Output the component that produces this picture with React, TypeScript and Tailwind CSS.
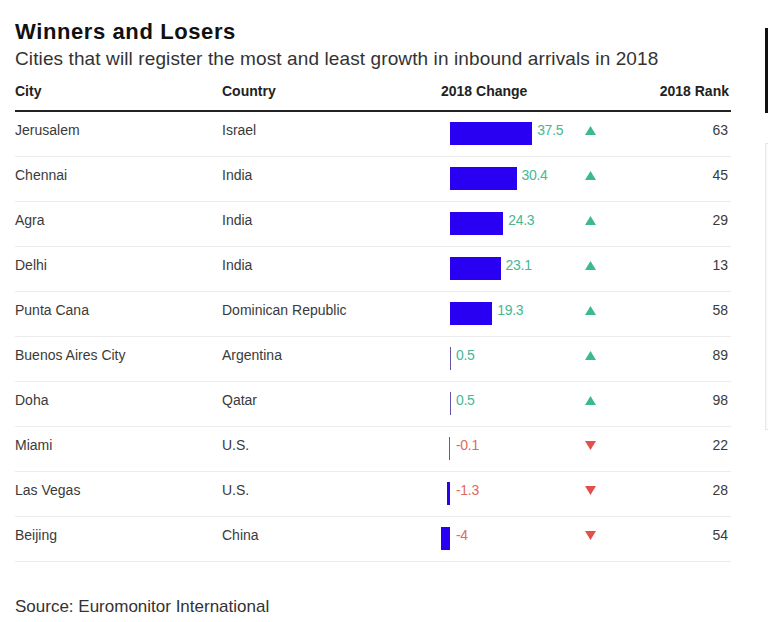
import React from "react";

type Row = { city: string; country: string; change: number; label: string; rank: number };

const rows: Row[] = [
  { city: "Jerusalem", country: "Israel", change: 37.5, label: "37.5", rank: 63 },
  { city: "Chennai", country: "India", change: 30.4, label: "30.4", rank: 45 },
  { city: "Agra", country: "India", change: 24.3, label: "24.3", rank: 29 },
  { city: "Delhi", country: "India", change: 23.1, label: "23.1", rank: 13 },
  { city: "Punta Cana", country: "Dominican Republic", change: 19.3, label: "19.3", rank: 58 },
  { city: "Buenos Aires City", country: "Argentina", change: 0.5, label: "0.5", rank: 89 },
  { city: "Doha", country: "Qatar", change: 0.5, label: "0.5", rank: 98 },
  { city: "Miami", country: "U.S.", change: -0.1, label: "-0.1", rank: 22 },
  { city: "Las Vegas", country: "U.S.", change: -1.3, label: "-1.3", rank: 28 },
  { city: "Beijing", country: "China", change: -4, label: "-4", rank: 54 },
];

const SCALE = 2.19;

function Bar({ value }: { value: number }) {
  const w = Math.max(1, Math.abs(value) * SCALE);
  const thin = w < 1.6;
  return (
    <div
      className={thin ? "h-[23px] bg-[#6656a8]" : "h-[23px] bg-[#2a00f2]"}
      style={{ width: thin ? 1 : w }}
    />
  );
}

function Up() {
  return (
    <svg width="11" height="9" viewBox="0 0 11 9">
      <polygon points="5.5,0 11,9 0,9" fill="#3cb98d" />
    </svg>
  );
}

function Down() {
  return (
    <svg width="11" height="9" viewBox="0 0 11 9">
      <polygon points="0,0 11,0 5.5,9" fill="#e2504b" />
    </svg>
  );
}

export default function App() {
  return (
    <div
      className="flex bg-white w-[768px] h-[622px] overflow-hidden text-[#333]"
      style={{ fontFamily: '"Liberation Sans", Arial, sans-serif' }}
    >
      <div className="pl-[15px] w-[731px] shrink-0">
        <h1 className="mt-[19px] text-[22px] leading-[26px] font-bold text-[#111] tracking-[0.6px]">
          Winners and Losers
        </h1>
        <p className="mt-[2px] text-[19px] leading-[24px] text-[#333] tracking-[0.11px]">
          Cities that will register the most and least growth in inbound arrivals in 2018
        </p>
        <div className="mt-[11px] flex items-end h-[30px] pb-[11px] border-b-2 border-[#222] text-[14px] leading-[16px] font-bold text-[#222]">
          <div className="w-[207px]">City</div>
          <div className="w-[213px]">Country</div>
          <div className="w-[150px] pl-[6px]">2018 Change</div>
          <div className="flex-1 text-right pr-[2px]">2018 Rank</div>
        </div>
        {rows.map((r) => {
          const pos = r.change >= 0;
          return (
            <div
              key={r.city}
              className="flex items-start h-[45px] pt-[8px] border-b border-[#ececec] text-[14px] leading-[20px] text-[#3a3a3a]"
            >
              <div className="w-[207px]">{r.city}</div>
              <div className="w-[213px]">{r.country}</div>
              <div className="w-[150px] flex items-start">
                <div className="w-[15px] flex justify-end mt-[2px]">{!pos && <Bar value={r.change} />}</div>
                {pos && (
                  <div className="mt-[2px]">
                    <Bar value={r.change} />
                  </div>
                )}
                <span
                  className={
                    pos
                      ? "ml-[5px] tracking-[-0.3px] text-[#45b892]"
                      : "ml-[6px] tracking-[-0.3px] text-[#e06a62]"
                  }
                >
                  {r.label}
                </span>
              </div>
              <div className="w-[12px] pt-[6px] flex">{pos ? <Up /> : <Down />}</div>
              <div className="flex-1 text-right pr-[3px]">{r.rank}</div>
            </div>
          );
        })}
        <p className="mt-[35px] text-[17px] leading-[20px] text-[#333]">Source: Euromonitor International</p>
      </div>
      <div className="ml-[34px] flex flex-col">
        <div className="mt-[28px] w-[3px] h-[85px] bg-[#111]" />
        <div className="mt-[30px] w-[3px] h-[287px] border-l border-t border-b border-[#e6e6e6] bg-[#fbfbfb]" />
      </div>
    </div>
  );
}
